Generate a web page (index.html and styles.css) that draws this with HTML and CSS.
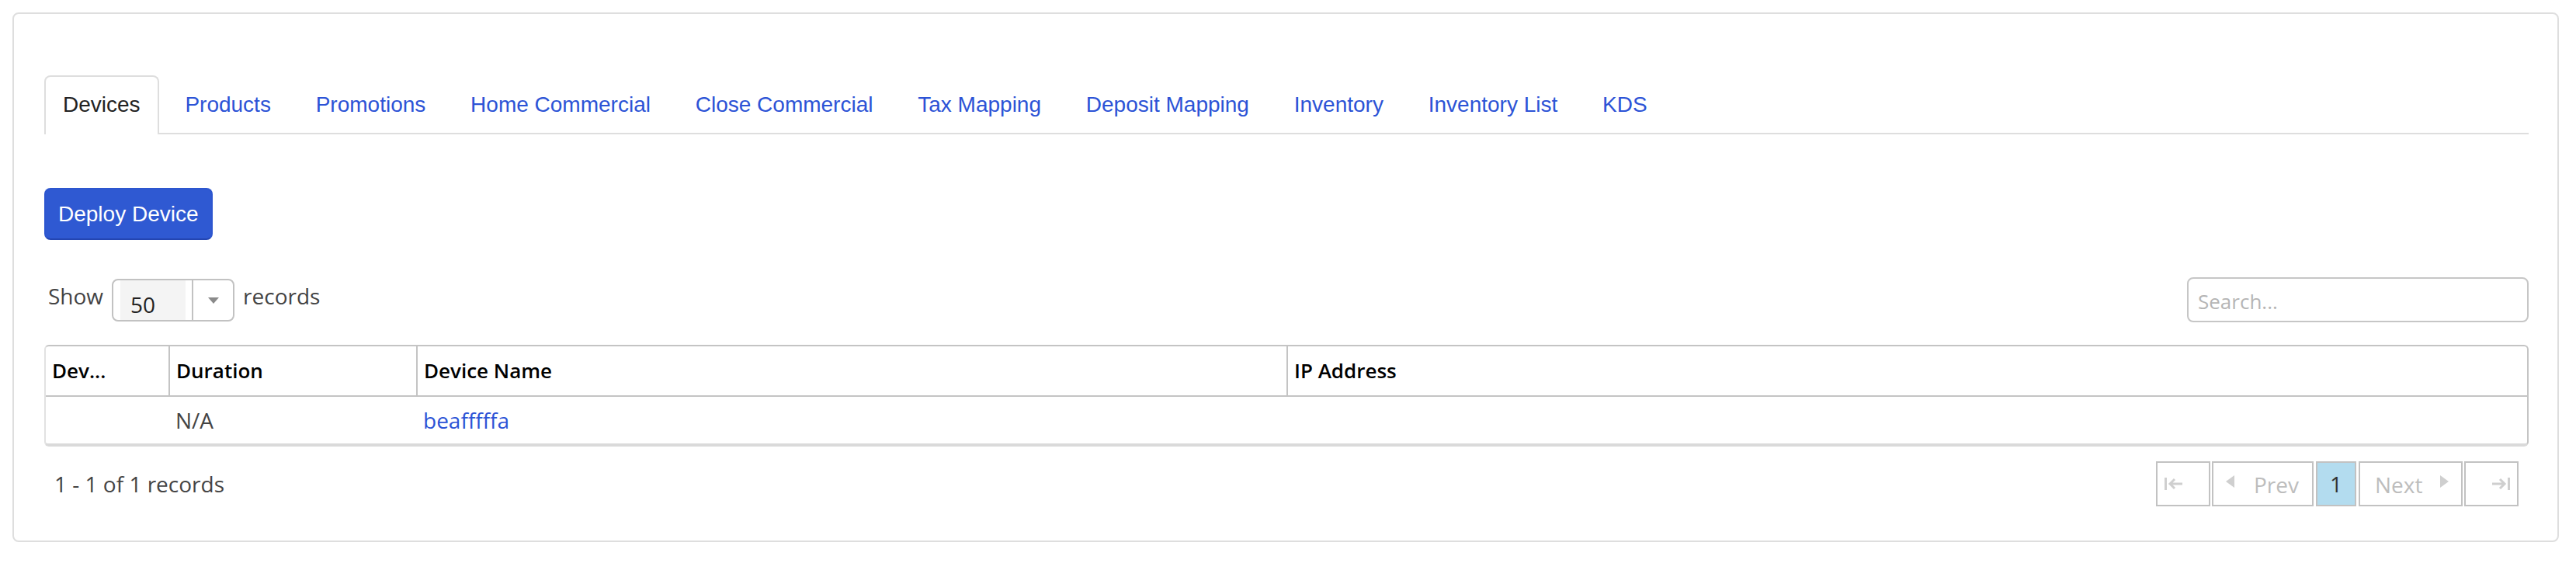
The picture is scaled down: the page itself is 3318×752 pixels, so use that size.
FILE: index.html
```html
<!DOCTYPE html>
<html>
<head>
<meta charset="utf-8">
<link rel="stylesheet" href="styles.css">
</head>
<body>
<div class="card">
  <ul class="tabs">
    <li class="tab active">Devices</li>
    <li class="tab">Products</li>
    <li class="tab">Promotions</li>
    <li class="tab">Home Commercial</li>
    <li class="tab">Close Commercial</li>
    <li class="tab">Tax Mapping</li>
    <li class="tab">Deposit Mapping</li>
    <li class="tab">Inventory</li>
    <li class="tab">Inventory List</li>
    <li class="tab">KDS</li>
  </ul>

  <div class="actions">
    <button class="btn-primary">Deploy Device</button>
  </div>

  <div class="toolbar">
    <div class="show">
      <span>Show</span>
      <div class="dropdown">
        <span class="dd-input">50</span>
        <span class="dd-arrow"><span class="tri-down"></span></span>
      </div>
      <span>records</span>
    </div>
    <div class="search"><span class="placeholder">Search...</span></div>
  </div>

  <div class="grid">
    <table>
      <colgroup>
        <col class="c1"><col class="c2"><col class="c3"><col>
      </colgroup>
      <thead>
        <tr><th>Dev...</th><th>Duration</th><th>Device Name</th><th>IP Address</th></tr>
      </thead>
      <tbody>
        <tr><td></td><td>N/A</td><td><a class="link">beafffffa</a></td><td></td></tr>
      </tbody>
    </table>
  </div>

  <div class="footer">
    <span class="count">1 - 1 of 1 records</span>
    <div class="pager">
      <span class="pg pg-first">
        <svg width="26" height="18" viewBox="0 0 26 18"><rect x="1" y="1" width="3" height="16" fill="#cfcfcf"/><path d="M24 9H9M14 3L8 9L14 15" stroke="#cfcfcf" stroke-width="3" fill="none"/></svg>
      </span>
      <span class="pg pg-prev"><span class="tri-left"></span><span class="pg-text">Prev</span></span>
      <span class="pg pg-cur">1</span>
      <span class="pg pg-next"><span class="pg-text">Next</span><span class="tri-right"></span></span>
      <span class="pg pg-last">
        <svg width="26" height="18" viewBox="0 0 26 18"><rect x="22" y="1" width="3" height="16" fill="#cfcfcf"/><path d="M2 9H17M12 3L18 9L12 15" stroke="#cfcfcf" stroke-width="3" fill="none"/></svg>
      </span>
    </div>
  </div>
</div>
</body>
</html>
```

FILE: styles.css
```css
html, body {
  margin: 0;
  padding: 0;
  background: #fff;
}
body {
  font-family: "Open Sans", "Liberation Sans", sans-serif;
  color: #444;
  font-size: 28px;
}
.card {
  margin: 16px 22px 0 16px;
  border: 2px solid #dedede;
  border-radius: 8px;
  padding: 79px 37px 44px 39px;
}
.tabs {
  list-style: none;
  margin: 0;
  padding: 0;
  display: flex;
  border-bottom: 2px solid #dedede;
  font-family: "Liberation Sans", Arial, sans-serif;
}
.tab {
  height: 72px;
  line-height: 72px;
  padding: 0 22px;
  margin-right: 9.8px;
  margin-bottom: -2px;
  border: 2px solid transparent;
  border-bottom: 0;
  border-radius: 8px 8px 0 0;
  color: #2c53d6;
  white-space: nowrap;
}
.tab.active {
  color: #222;
  border-color: #dedede;
  background: #fff;
  height: 74px;
}
.actions {
  margin-top: 69px;
}
.btn-primary {
  font-family: "Liberation Sans", Arial, sans-serif;
  font-size: 28px;
  color: #fff;
  background: #2f59d2;
  border: 2px solid #2d56cf;
  border-bottom-color: #2345b2;
  border-radius: 8px;
  height: 67px;
  padding: 0 16px;
  margin: 0;
  display: block;
}
.toolbar {
  margin-top: 48px;
  display: flex;
  justify-content: space-between;
  align-items: center;
  height: 58px;
}
.show {
  display: flex;
  align-items: center;
  margin-left: 5px;
  margin-top: -10px;
}
.dropdown {
  margin: 10px 11px 0 11px;
  width: 158px;
  height: 55px;
  box-sizing: border-box;
  border: 2px solid #c2c2c2;
  border-radius: 8px;
  display: flex;
  align-items: stretch;
  overflow: hidden;
}
.dd-input {
  margin-left: 9px;
  width: 71px;
  background: #f4f4f4;
  padding-left: 13px;
  line-height: 62px;
  color: #222;
}
.dd-arrow {
  margin-left: 8px;
  border-left: 2px solid #c2c2c2;
  flex: 1;
  display: flex;
  align-items: center;
  justify-content: center;
}
.tri-down {
  width: 0;
  height: 0;
  border-left: 7px solid transparent;
  border-right: 7px solid transparent;
  border-top: 8px solid #8a8a8a;
  margin-top: 2px;
}
.search {
  width: 440px;
  height: 58px;
  box-sizing: border-box;
  border: 2px solid #c6c6c6;
  border-radius: 8px;
  display: flex;
  align-items: center;
  padding-left: 12px;
}
.placeholder {
  color: #b5b5b5;
  font-size: 26px;
  margin-top: 4px;
}
.grid {
  margin-top: 29px;
  border: 2px solid #c4c4c4;
  border-bottom: 4px solid #dadada;
  border-radius: 6px;
  border-left-color: #e2e2e2;
  overflow: hidden;
}
table {
  width: 100%;
  border-collapse: collapse;
  table-layout: fixed;
}
col.c1 { width: 159px; }
col.c2 { width: 319px; }
col.c3 { width: 1121px; }
th {
  text-align: left;
  font-weight: 600;
  font-size: 26px;
  color: #000;
  height: 61px;
  padding: 0 0 2px 8px;
  border-bottom: 2px solid #c4c4c4;
  border-left: 2px solid #c4c4c4;
  white-space: nowrap;
  overflow: hidden;
}
th:first-child { border-left: 0; }
td {
  height: 60px;
  padding: 0 0 0 8px;
  color: #444;
}
.link {
  color: #2c53d6;
}
.footer {
  margin-top: 19px;
  display: flex;
  justify-content: space-between;
  align-items: center;
  height: 58px;
}
.count {
  margin-left: 13px;
  color: #444;
}
.pager {
  display: flex;
  margin-right: 13px;
}
.pg {
  height: 58px;
  box-sizing: border-box;
  border: 2px solid #c2c2c2;
  display: flex;
  align-items: center;
  color: #bdbdbd;
  margin-left: 2px;
}
.pg-first {
  width: 70px;
  padding-left: 8px;
  margin-left: 0;
}
.pg-prev {
  width: 131px;
  padding-left: 16px;
}
.pg-cur {
  width: 52px;
  justify-content: center;
  background: #b3dcef;
  color: #333;
  margin-left: 3px;
}
.pg-next {
  width: 134px;
  padding-left: 19px;
  margin-left: 3px;
}
.pg-last {
  width: 70px;
  justify-content: flex-end;
  padding-right: 8px;
}
.pg-text {
  line-height: 58px;
  margin-top: 2px;
}
.tri-left {
  width: 0;
  height: 0;
  border-top: 8px solid transparent;
  border-bottom: 8px solid transparent;
  border-right: 11px solid #cfcfcf;
  margin-right: 25px;
  margin-top: -6px;
}
.tri-right {
  width: 0;
  height: 0;
  border-top: 8px solid transparent;
  border-bottom: 8px solid transparent;
  border-left: 11px solid #cfcfcf;
  margin-left: 23px;
  margin-top: -6px;
}
```
